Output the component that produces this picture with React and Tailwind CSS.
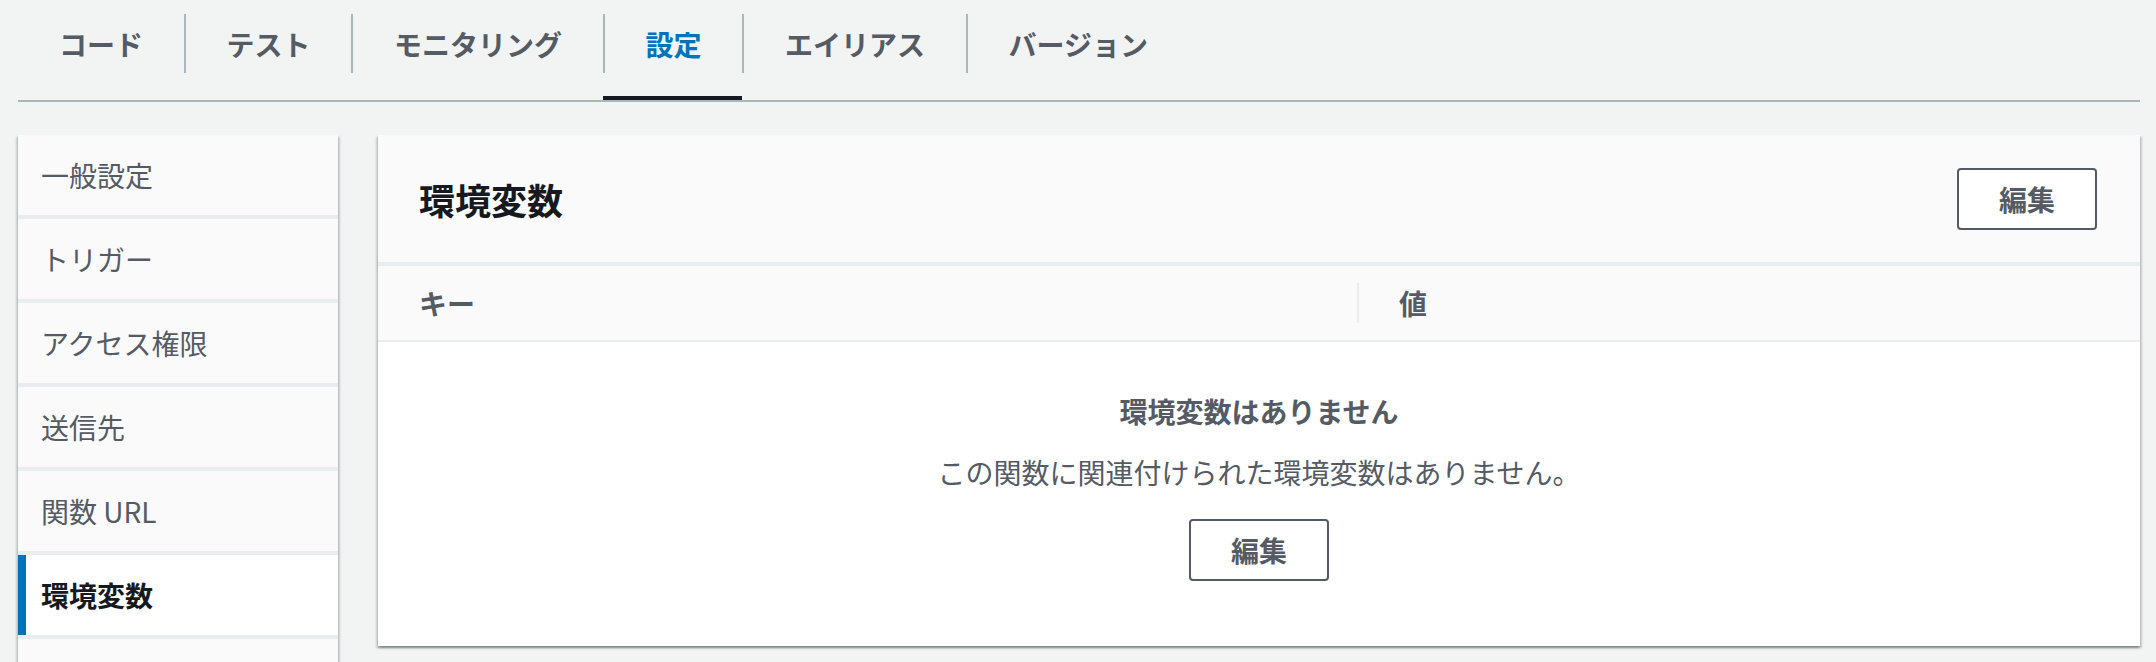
const TABS = ['コード', 'テスト', 'モニタリング', '設定', 'エイリアス', 'バージョン'];

// last entry is cut off by the bottom of the window, so it carries no label
const SIDE_ITEMS = ['一般設定', 'トリガー', 'アクセス権限', '送信先', '関数 URL', '環境変数', ''];

const ACTIVE_TAB = '設定';
const ACTIVE_ITEM = '環境変数';

const FONT = { fontFamily: '"Noto Sans CJK JP", "Noto Sans", "Liberation Sans", sans-serif' };

function EditButton() {
  return (
    <button className="h-[62px] w-[140px] rounded-[4px] border-2 border-[#545b64] bg-white text-[28px] font-bold leading-none text-[#545b64]">
      編集
    </button>
  );
}

function App() {
  return (
    <div className="h-[662px] overflow-hidden bg-[#f2f3f3] pl-[18px] pr-[16px]" style={FONT}>
      {/* Tabs */}
      <div className="flex border-b-2 border-[#aab7b8]">
        {TABS.map((t, i) => (
          <button
            key={t}
            className={`flex h-[100px] flex-col border-b-4 ${
              t === ACTIVE_TAB ? 'border-[#16191f]' : 'border-transparent'
            }`}
          >
            <div
              className={`mt-[14px] flex h-[59px] items-center pl-[41px] pr-[40.5px] text-[28px] font-bold leading-none ${
                i > 0 ? 'border-l-2 border-[#aab7b8]' : ''
              } ${t === ACTIVE_TAB ? 'text-[#0073bb]' : 'text-[#545b64]'}`}
            >
              {t}
            </div>
          </button>
        ))}
      </div>

      <div className="mt-[33px] flex items-start gap-[40px]">
        {/* Side nav */}
        <div className="flex w-[320px] shrink-0 flex-col gap-[4px] bg-[#eaeded] shadow-[0_2px_2px_0_rgba(0,28,36,0.3),2px_2px_2px_0_rgba(0,28,36,0.15),-2px_2px_2px_0_rgba(0,28,36,0.15)]">
          {SIDE_ITEMS.map((item, i) =>
            item === ACTIVE_ITEM ? (
              <div
                key={i}
                className="flex h-[80px] items-center border-l-8 border-[#0073bb] bg-white pl-[15px] text-[28px] font-bold leading-none text-[#16191f]"
              >
                {item}
              </div>
            ) : (
              <div
                key={i}
                className="flex h-[80px] items-center bg-[#fafafa] pl-[23px] text-[28px] leading-none text-[#545b64]"
              >
                {item}
              </div>
            )
          )}
        </div>

        {/* Environment variables panel */}
        <div className="flex-1 bg-[#eaeded] shadow-[0_2px_2px_0_rgba(0,28,36,0.3),2px_2px_2px_0_rgba(0,28,36,0.15),-2px_2px_2px_0_rgba(0,28,36,0.15)]">
          <div className="flex h-[127px] items-center justify-between bg-[#fafafa] pl-[41px] pr-[43px]">
            <h2 className="text-[36px] font-bold leading-none text-[#16191f]">環境変数</h2>
            <EditButton />
          </div>

          <div className="mt-[4px] flex h-[74px] items-center bg-[#fafafa]">
            <div className="w-[979px] pl-[41px] text-[28px] font-bold leading-none text-[#545b64]">キー</div>
            <div className="flex h-[40px] items-center border-l-2 border-[#eaeded] pl-[40px] text-[28px] font-bold leading-none text-[#545b64]">
              値
            </div>
          </div>

          <div className="mt-[2px] flex flex-col items-center bg-white pb-[65px] pt-[49px]">
            <p className="text-[28px] font-bold leading-[40px] text-[#545b64]">環境変数はありません</p>
            <p className="mt-[21px] text-[28px] leading-[40px] text-[#545b64]">
              この関数に関連付けられた環境変数はありません。
            </p>
            <div className="mt-[27px]">
              <EditButton />
            </div>
          </div>
        </div>
      </div>
    </div>
  );
}

export default App;
